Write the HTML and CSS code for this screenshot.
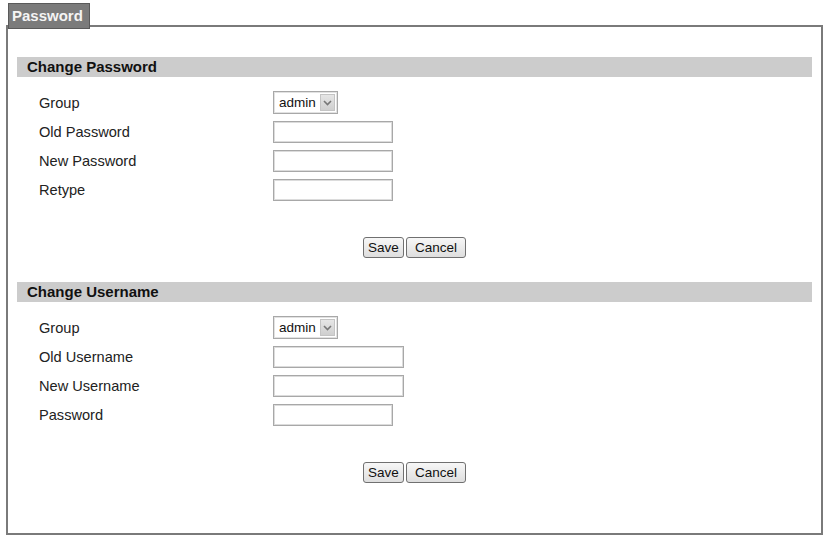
FILE: index.html
```html
<!DOCTYPE html>
<html lang="en">

<head>
    <meta charset="UTF-8">
    <title>Password</title>
    <link rel="stylesheet" href="styles.css">
</head>

<body>
    <div class="page">
        <div class="tab">Password</div>
        <div class="panel">
            <h3 class="section-title">Change Password</h3>
            <div class="rows">
                <div class="row">
                    <label>Group</label>
                    <span class="select-wrap">
                        <select>
                            <option>admin</option>
                        </select>
                        <span class="arrow"><svg width="9" height="6" viewBox="0 0 9 6"><path d="M1 1l3.5 3.5L8 1" fill="none" stroke="#777" stroke-width="1.6"/></svg></span>
                    </span>
                </div>
                <div class="row">
                    <label>Old Password</label>
                    <input type="password" class="field">
                </div>
                <div class="row">
                    <label>New Password</label>
                    <input type="password" class="field">
                </div>
                <div class="row">
                    <label>Retype</label>
                    <input type="password" class="field">
                </div>
            </div>
            <div class="actions">
                <button class="btn save">Save</button>
                <button class="btn cancel">Cancel</button>
            </div>

            <h3 class="section-title">Change Username</h3>
            <div class="rows">
                <div class="row">
                    <label>Group</label>
                    <span class="select-wrap">
                        <select>
                            <option>admin</option>
                        </select>
                        <span class="arrow"><svg width="9" height="6" viewBox="0 0 9 6"><path d="M1 1l3.5 3.5L8 1" fill="none" stroke="#777" stroke-width="1.6"/></svg></span>
                    </span>
                </div>
                <div class="row">
                    <label>Old Username</label>
                    <input type="text" class="field wide">
                </div>
                <div class="row">
                    <label>New Username</label>
                    <input type="text" class="field wide">
                </div>
                <div class="row">
                    <label>Password</label>
                    <input type="password" class="field">
                </div>
            </div>
            <div class="actions">
                <button class="btn save">Save</button>
                <button class="btn cancel">Cancel</button>
            </div>
        </div>
    </div>
</body>

</html>
```

FILE: styles.css
```css
* {
    margin: 0;
    padding: 0;
    box-sizing: border-box;
}

body {
    font-family: 'Liberation Sans', Arial, sans-serif;
    background: #fff;
    color: #222;
}

.page {
    padding: 3px 0 0 6px;
    width: 823px;
}

/* Tab */
.tab {
    position: relative;
    z-index: 1;
    display: inline-block;
    margin-left: 2px;
    margin-bottom: -4px;
    width: 82px;
    height: 26px;
    padding: 3px 0 0 3px;
    background: #7b7b7b;
    border: 1px solid #5a5a5a;
    color: #f4f4f4;
    font-size: 15px;
    font-weight: bold;
}

.panel {
    border: 2px solid #7a7a7a;
    height: 510px;
    padding: 30px 9px 0 9px;
}

.section-title {
    height: 20px;
    background: #cccccc;
    font-size: 15px;
    font-weight: bold;
    color: #111;
    padding: 1px 0 0 10px;
}

.rows {
    margin-top: 11px;
    padding-left: 22px;
}

.row {
    display: flex;
    align-items: center;
    height: 29px;
}

.row label {
    width: 234px;
    font-size: 14.6px;
    color: #222;
}

.field {
    width: 120px;
    height: 22px;
    border: 1px solid #a8a8a8;
    box-shadow: inset 0 0 0 1px #dcdcdc;
    font-size: 13px;
    padding: 0 3px;
}

.field.wide {
    width: 131px;
}

.select-wrap {
    position: relative;
    display: inline-block;
    width: 65px;
    height: 23px;
}

.select-wrap select {
    appearance: none;
    -webkit-appearance: none;
    width: 65px;
    height: 23px;
    border: 1px solid #a8a8a8;
    box-shadow: inset 0 0 0 1px #e2e2e2;
    background: #fff;
    font-family: 'Liberation Sans', Arial, sans-serif;
    font-size: 13.5px;
    color: #111;
    padding: 0 0 0 5px;
}

.select-wrap .arrow {
    position: absolute;
    right: 3px;
    top: 3px;
    width: 15px;
    height: 17px;
    background: linear-gradient(#e6e6e6, #cfcfcf);
    border: 1px solid #c4c4c4;
    display: flex;
    align-items: center;
    justify-content: center;
    pointer-events: none;
}

.actions {
    display: flex;
    justify-content: center;
    gap: 2px;
    margin-top: 33px;
    margin-bottom: 24px;
}

.btn {
    height: 21px;
    border: 1px solid #707070;
    border-radius: 3px;
    background: linear-gradient(#f7f7f7, #dedede);
    font-family: 'Liberation Sans', Arial, sans-serif;
    font-size: 13.5px;
    color: #111;
}

.btn.save {
    width: 41px;
}

.btn.cancel {
    width: 60px;
}
```
